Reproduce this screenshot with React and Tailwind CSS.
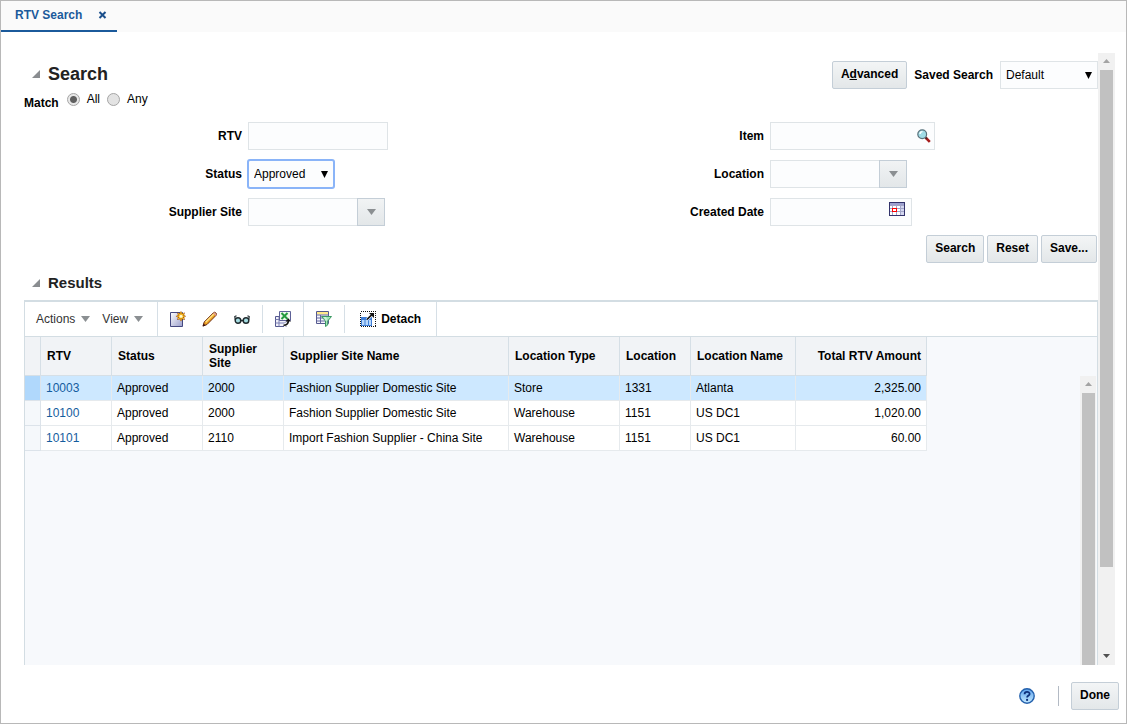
import React from 'react';

const columns = [
    { key: 'rtv', label: 'RTV', width: 71 },
    { key: 'status', label: 'Status', width: 91 },
    { key: 'site', label: 'Supplier Site', width: 81 },
    { key: 'siteName', label: 'Supplier Site Name', width: 225 },
    { key: 'locationType', label: 'Location Type', width: 111 },
    { key: 'location', label: 'Location', width: 71 },
    { key: 'locationName', label: 'Location Name', width: 105 },
    { key: 'amount', label: 'Total RTV Amount', width: 131 },
];

const rows = [
    { rtv: '10003', status: 'Approved', site: '2000', siteName: 'Fashion Supplier Domestic Site', locationType: 'Store', location: '1331', locationName: 'Atlanta', amount: '2,325.00' },
    { rtv: '10100', status: 'Approved', site: '2000', siteName: 'Fashion Supplier Domestic Site', locationType: 'Warehouse', location: '1151', locationName: 'US DC1', amount: '1,020.00' },
    { rtv: '10101', status: 'Approved', site: '2110', siteName: 'Import Fashion Supplier - China Site', locationType: 'Warehouse', location: '1151', locationName: 'US DC1', amount: '60.00' },
];

const Triangle = () => (
    <svg className="w-2 h-2" viewBox="0 0 8 8"><path d="M8 0v8H0z" fill="#8a8d90"/></svg>
);

const Caret = () => (
    <svg className="w-[9px] h-[6px]" viewBox="0 0 9 6"><path d="M0 0h9L4.5 6z" fill="#8b8f92"/></svg>
);

const SearchIcon = () => (
    <svg className="w-[14px] h-[14px]" viewBox="0 0 14 14">
        <path d="M8.5 8.5l4.3 4.3" stroke="#a81c1c" strokeWidth="2.6"/>
        <path d="M8 8l1.8 1.8" stroke="#333" strokeWidth="1.5"/>
        <circle cx="5.2" cy="5.2" r="4.4" fill="#a0dce6" stroke="#5a727c" strokeWidth="1.2"/>
        <path d="M3 5a2.5 2.5 0 012.5-2.4" stroke="#fff" strokeWidth="1.4" fill="none"/>
    </svg>
);

const CalendarIcon = () => (
    <svg className="w-4 h-[14px]" viewBox="0 0 16 14" shapeRendering="crispEdges">
        <path d="M0 0h16v14H0z" fill="#33336b"/>
        <path d="M1 1h14v2H1z" fill="#9da1cf"/>
        <path d="M1 3h14v10H1z" fill="#a2a5c8"/>
        <path d="M1 4h2v2H1zM4 4h3v2H4zM8 4h3v2H8zM1 7h2v2H1zM8 7h3v2H8zM1 10h2v3H1zM4 10h3v3H4zM8 10h3v3H8z" fill="#fff"/>
        <path d="M12 4h3v2h-3zM12 7h3v2h-3zM12 10h3v3h-3z" fill="#d3d6ef"/>
        <path d="M3 6h5v4H3z" fill="red"/>
        <path d="M4 7h3v2H4z" fill="#fff"/>
    </svg>
);

const NewIcon = () => (
    <svg className="w-4 h-4" viewBox="0 0 16 16">
        <defs>
            <linearGradient id="page" x1="0" y1="0" x2="1" y2="1">
                <stop offset="0" stopColor="#fff"/>
                <stop offset="1" stopColor="#9a9ecb"/>
            </linearGradient>
        </defs>
        <path d="M.5 1.5h12v14H.5z" fill="url(#page)" stroke="#454980"/>
        <path d="M11 0l1.3 2.2 2.6-.8-.8 2.6L16 5.2l-1.9 1.3.8 2.6-2.6-.8L11 10.500l-1.300-2.200-2.600.8.8-2.600L5.800 5.200l2.100-1.200-.8-2.600 2.600.8z" fill="#8d3f10"/>
        <path d="M11 1v8.500M6.800 5.200h8.400M8.200 2.400l5.600 5.600M13.800 2.400L8.200 8" stroke="#ffc421" strokeWidth="1.300"/>
        <circle cx="11" cy="5.200" r="1.500" fill="#fffbd0"/>
    </svg>
);

const PencilIcon = () => (
    <svg className="w-4 h-4" viewBox="0 0 16 16">
        <path d="M1 15l1.200-4L11.800 1.400c1-.9 3.500 1.300 2.600 2.600L5 13.500z" fill="#eda020" stroke="#6e2f18"/>
        <path d="M3.600 11.200l8-8" stroke="#ffe489" strokeWidth="1.400"/>
        <path d="M11.800 1.800l2.400 2.400" stroke="#dfa0a0" strokeWidth="1.600"/>
        <path d="M.6 15.400l1-3 2 2z" fill="#3d1411"/>
    </svg>
);

const GlassesIcon = () => (
    <svg className="w-4 h-4" viewBox="0 0 16 16" fill="none">
        <circle cx="4" cy="9.500" r="2.800" fill="#a5dde2" stroke="#1f2a2e" strokeWidth="1.400"/>
        <circle cx="12" cy="9.500" r="2.800" fill="#a5dde2" stroke="#1f2a2e" strokeWidth="1.400"/>
        <path d="M6 8.500l2 1.500 2-1.500M1.300 8.800L.8 5.500l1.700-.8M14.700 8.800l.5-3.300-1.700-.8" stroke="#1f2a2e" strokeWidth="1.200"/>
    </svg>
);

const ExportIcon = () => (
    <svg className="w-4 h-4" viewBox="0 0 16 16" fill="none">
        <path d="M.5 5.500h11v10H.5z" fill="#f0f0fa" stroke="#54588e"/>
        <path d="M.5 8.500h11M.5 12h11M4 5.500v10" stroke="#7c80b2"/>
        <path d="M4.500.5h11v9h-11z" fill="#eef8ee" stroke="#5d6197"/>
        <path d="M6.500 2l6 6M12.500 2l-6 6" stroke="#239a3d" strokeWidth="2"/>
        <path d="M9 14.200c3 0 4.200-1 4.200-4.200" stroke="#fff" strokeWidth="3.500"/>
        <path d="M8.500 14.200c3.400 0 4.900-1.200 4.900-5" stroke="#111" strokeWidth="1.600"/>
        <path d="M10.500 10.500l2.800-3.300 2.700 3.300z" fill="#111"/>
    </svg>
);

const FilterIcon = () => (
    <svg className="w-4 h-4" viewBox="0 0 16 16" fill="none">
        <path d="M.5.500h12v12H.5z" fill="#f4f4fb" stroke="#54588e"/>
        <path d="M1 1h11v2.500H1z" fill="#ffe98a"/>
        <path d="M.5 4h12M.5 7h12M.5 10h12M4.500 4v8.500" stroke="#6468a0"/>
        <path d="M5.500 5.500h10l-3.800 4.500v4l-2.200 1.500V10z" fill="#a2e4b8" stroke="#3b9963"/>
        <path d="M8 6.800h2v3" stroke="#e2faea"/>
    </svg>
);

const DetachIcon = () => (
    <svg className="w-4 h-4" viewBox="0 0 16 16" fill="none">
        <path d="M.5.5h15v15H.5z" stroke="#111" strokeDasharray="1 1" shapeRendering="crispEdges"/>
        <path d="M1 6h11v9H1z" fill="#3f7ed8"/>
        <path d="M2 9h2.500v5H2zM5.500 9H8v5H5.500zM9 9h2v5H9z" fill="#b8d8fb"/>
        <path d="M7 8.500l5.500-5.500" stroke="#fff" strokeWidth="3"/>
        <path d="M7 8.500L13 2.500" stroke="#111" strokeWidth="1.700"/>
        <path d="M9 2h5v5z" fill="#111"/>
    </svg>
);

const HelpIcon = () => (
    <svg className="w-4 h-4" viewBox="0 0 16 16" fill="none">
        <defs>
            <linearGradient id="help" x1="0" y1="0" x2="0" y2="1">
                <stop offset="0" stopColor="#5ba2ee"/>
                <stop offset="1" stopColor="#c5eaff"/>
            </linearGradient>
        </defs>
        <circle cx="8" cy="8" r="7.200" fill="url(#help)" stroke="#2360ac" strokeWidth="1.400"/>
        <path d="M5.600 6.200c0-3.200 5-3 5-.3 0 1.700-2.500 1.700-2.500 3.700" stroke="#0d2f7a" strokeWidth="1.800"/>
        <circle cx="8.100" cy="11.900" r="1.100" fill="#0d2f7a"/>
    </svg>
);

const Button = ({ children }) => (
    <button className="h-7 px-2 pb-[2px] rounded-xs border border-[#c4ced7] bg-linear-to-b from-[#f3f5f6] to-[#e3e7e9] font-bold whitespace-nowrap">
        {children}
    </button>
);

const Select = ({ id, value, className }) => (
    <div className="relative flex">
        <select id={id} defaultValue={value} className={`h-7 pl-[5px] pr-5 appearance-none outline-none bg-[#fcfdfe] ${className}`}>
            <option>{value}</option>
        </select>
        <svg className="absolute right-[6px] top-[11px] w-[7px] h-[7px] pointer-events-none" viewBox="0 0 7 7"><path d="M0 0h7L3.5 7z" fill="#000"/></svg>
    </div>
);

const Field = ({ id, label, children }) => (
    <div className="flex items-center gap-[6px]">
        <label htmlFor={id} className="w-[218px] shrink-0 text-right font-bold">{label}</label>
        {children}
    </div>
);

const ComboBox = ({ id }) => (
    <div className="flex h-7">
        <input id={id} className="w-[109px] px-[5px] border border-r-0 border-[#dfe4e7] bg-[#fcfdfe] outline-none"/>
        <button aria-label="Open list" className="w-7 flex items-center justify-center border border-[#c4ced7] bg-linear-to-b from-[#f1f3f4] to-[#e3e7e9]">
            <Caret/>
        </button>
    </div>
);

const Separator = ({ short }) => (
    <div className={`w-px bg-[#d6dfe6] ${short ? 'my-[3px]' : ''}`}/>
);

const ToolButton = ({ label, children }) => (
    <button aria-label={label} className="w-4 flex items-center justify-center">{children}</button>
);

const ResultsTable = () => (
    <table className="w-[902px] shrink-0 table-fixed border-separate border-spacing-0 self-start">
        <colgroup>
            <col className="w-4"/>
            {columns.map((col) => <col key={col.key} style={{ width: col.width }}/>)}
        </colgroup>
        <thead>
            <tr className="h-[39px] bg-[#f1f3f6]">
                <th className="border-r border-b border-[#d6dfe6]"/>
                {columns.map((col) => (
                    <th key={col.key} className={`pl-[6px] pr-[5px] border-r border-b border-[#d6dfe6] leading-[14px] ${col.key === 'amount' ? 'text-right' : 'text-left'}`}>
                        {col.label}
                    </th>
                ))}
            </tr>
        </thead>
        <tbody>
            {rows.map((row, i) => (
                <tr key={row.rtv} className={`h-[25px] ${i === 0 ? 'bg-[#cde8ff]' : 'bg-white'}`}>
                    <td className={`border-r border-b border-[#dce3ea] ${i === 0 ? 'bg-[#b0d8fc]' : 'bg-[#f5f8fb]'}`}/>
                    {columns.map((col) => (
                        <td key={col.key} className={`px-[5px] border-r border-b border-[#e6eaed] ${col.key === 'amount' ? 'text-right' : ''}`}>
                            {col.key === 'rtv' ? <a href="#" className="text-[#145c9e]">{row.rtv}</a> : row[col.key]}
                        </td>
                    ))}
                </tr>
            ))}
        </tbody>
    </table>
);

const App = () => {
    return (
        <div className="h-screen flex flex-col overflow-hidden border border-[#b8b8b8] bg-white text-xs text-black font-['Liberation_Sans',Arial,sans-serif]">
            <nav className="h-[31px] shrink-0 flex bg-[#fafafa]">
                <div className="w-[116px] flex items-center justify-between pl-[14px] pr-[10px] pb-px border-b-2 border-[#1b5a9b] text-[#1b5a9b]">
                    <a href="#" className="font-bold whitespace-nowrap">RTV Search</a>
                    <button aria-label="Close tab">
                        <svg className="w-[9px] h-2" viewBox="0 0 8 8"><path d="M1 1l6 6M7 1L1 7" stroke="#1b4f8b" strokeWidth="2"/></svg>
                    </button>
                </div>
            </nav>

            <main className="flex-1 min-h-0 flex mt-[21px] ml-[23px] mr-[11px]">
                <div className="flex-1 min-w-0 flex flex-col pt-2">
                    <div className="flex justify-between">
                        <div className="flex items-center gap-2 pl-2 pb-[2px]">
                            <Triangle/>
                            <h1 className="text-lg leading-6 font-bold text-[#222]">Search</h1>
                        </div>
                        <div className="flex items-center gap-[7px]">
                            <Button>A<u>d</u>vanced</Button>
                            <label htmlFor="saved" className="font-bold">Saved Search</label>
                            <Select id="saved" value="Default" className="w-[98px] border border-[#dfe4e7]"/>
                        </div>
                    </div>

                    <fieldset className="flex items-start h-[33px]">
                        <legend className="float-left pt-[6px] mr-2 font-bold">Match</legend>
                        <input type="radio" id="all" name="match" defaultChecked className="appearance-none w-[13px] h-[13px] mt-1 rounded-full border border-[#a5a5a5] bg-[radial-gradient(circle,#606060_3px,#e8e8e8_4px)]"/>
                        <label htmlFor="all" className="mt-[2px] mx-[7px]">All</label>
                        <input type="radio" id="any" name="match" className="appearance-none w-[13px] h-[13px] mt-1 rounded-full border border-[#a5a5a5] bg-[#e3e3e3]"/>
                        <label htmlFor="any" className="mt-[2px] mx-[7px]">Any</label>
                    </fieldset>

                    <div className="grid grid-cols-2 gap-y-[10px] pr-[30px]">
                        <Field id="rtv" label="RTV">
                            <input id="rtv" className="w-[140px] h-7 px-[5px] border border-[#dfe4e7] bg-[#fcfdfe] outline-none"/>
                        </Field>
                        <Field id="item" label="Item">
                            <div className="relative flex">
                                <input id="item" className="w-[165px] h-7 pl-[5px] pr-6 border border-[#dfe4e7] bg-[#fcfdfe] outline-none"/>
                                <button aria-label="Find item" className="absolute right-1 top-[7px]"><SearchIcon/></button>
                            </div>
                        </Field>
                        <Field id="status" label="Status">
                            <Select id="status" value="Approved" className="w-[86px] rounded-xs border border-[#8ab4f8] ring-1 ring-[#8ab4f8]"/>
                        </Field>
                        <Field id="location" label="Location">
                            <ComboBox id="location"/>
                        </Field>
                        <Field id="supplier" label="Supplier Site">
                            <ComboBox id="supplier"/>
                        </Field>
                        <Field id="created" label="Created Date">
                            <div className="relative flex">
                                <input id="created" className="w-[142px] h-7 pl-[5px] pr-6 border border-[#dfe4e7] bg-[#fcfdfe] outline-none"/>
                                <button aria-label="Select date" className="absolute right-[7px] top-1"><CalendarIcon/></button>
                            </div>
                        </Field>
                    </div>

                    <div className="flex justify-end gap-[3px] mt-[9px] pr-px">
                        <Button>Search</Button>
                        <Button>Reset</Button>
                        <Button>Save...</Button>
                    </div>

                    <div className="flex items-center gap-2 pl-2 mt-[10px]">
                        <Triangle/>
                        <h2 className="text-[15px] leading-5 font-bold text-[#222]">Results</h2>
                    </div>

                    <section className="flex-1 min-h-0 flex flex-col mt-[7px] border-t-2 border-x border-[#d3dde3] bg-[#f7f9fc]">
                        <div className="h-[35px] shrink-0 flex bg-white border-b border-[#d3dde3] text-[#333]">
                            <div className="flex items-center gap-3 pl-[11px] pr-[14px]">
                                <button className="flex items-center gap-[6px]">Actions <Caret/></button>
                                <button className="flex items-center gap-[6px]">View <Caret/></button>
                            </div>
                            <Separator/>
                            <div className="flex gap-4 px-3">
                                <ToolButton label="Add"><NewIcon/></ToolButton>
                                <ToolButton label="Edit"><PencilIcon/></ToolButton>
                                <ToolButton label="View details"><GlassesIcon/></ToolButton>
                            </div>
                            <Separator short/>
                            <div className="flex px-3">
                                <ToolButton label="Export to Excel"><ExportIcon/></ToolButton>
                            </div>
                            <Separator/>
                            <div className="flex px-3">
                                <ToolButton label="Query by example"><FilterIcon/></ToolButton>
                            </div>
                            <Separator short/>
                            <button className="flex items-center gap-[5px] px-[15px] font-bold text-black"><DetachIcon/> Detach</button>
                            <Separator/>
                        </div>
                        <div className="flex-1 min-h-0 flex justify-between">
                            <ResultsTable/>
                            <div className="w-4 mt-[39px] mr-px flex flex-col items-center bg-[#f1f1f1]">
                                <svg className="w-[7px] h-[17px] shrink-0" viewBox="0 0 7 17"><path d="M3.5 6L7 10H0z" fill="#a3a3a3"/></svg>
                                <div className="w-[13px] flex-1 bg-[#c1c1c1]"/>
                            </div>
                        </div>
                    </section>
                </div>

                <div className="w-[17px] shrink-0 flex flex-col items-center bg-[#f1f1f1]">
                    <svg className="w-[7px] h-[17px] shrink-0" viewBox="0 0 7 17"><path d="M3.5 6L7 10H0z" fill="#a3a3a3"/></svg>
                    <div className="w-[13px] flex-1 min-h-0">
                        <div className="h-[86%] bg-[#c1c1c1]"/>
                    </div>
                    <svg className="w-[7px] h-[17px] shrink-0" viewBox="0 0 7 17"><path d="M3.5 10L7 6H0z" fill="#505050"/></svg>
                </div>
            </main>

            <footer className="h-[58px] shrink-0 flex items-center justify-end pt-[3px] pr-[7px]">
                <button aria-label="Help"><HelpIcon/></button>
                <div className="w-px h-5 ml-[23px] mr-3 bg-[#b3bac4]"/>
                <Button>Done</Button>
            </footer>
        </div>
    );
};

export default App;
